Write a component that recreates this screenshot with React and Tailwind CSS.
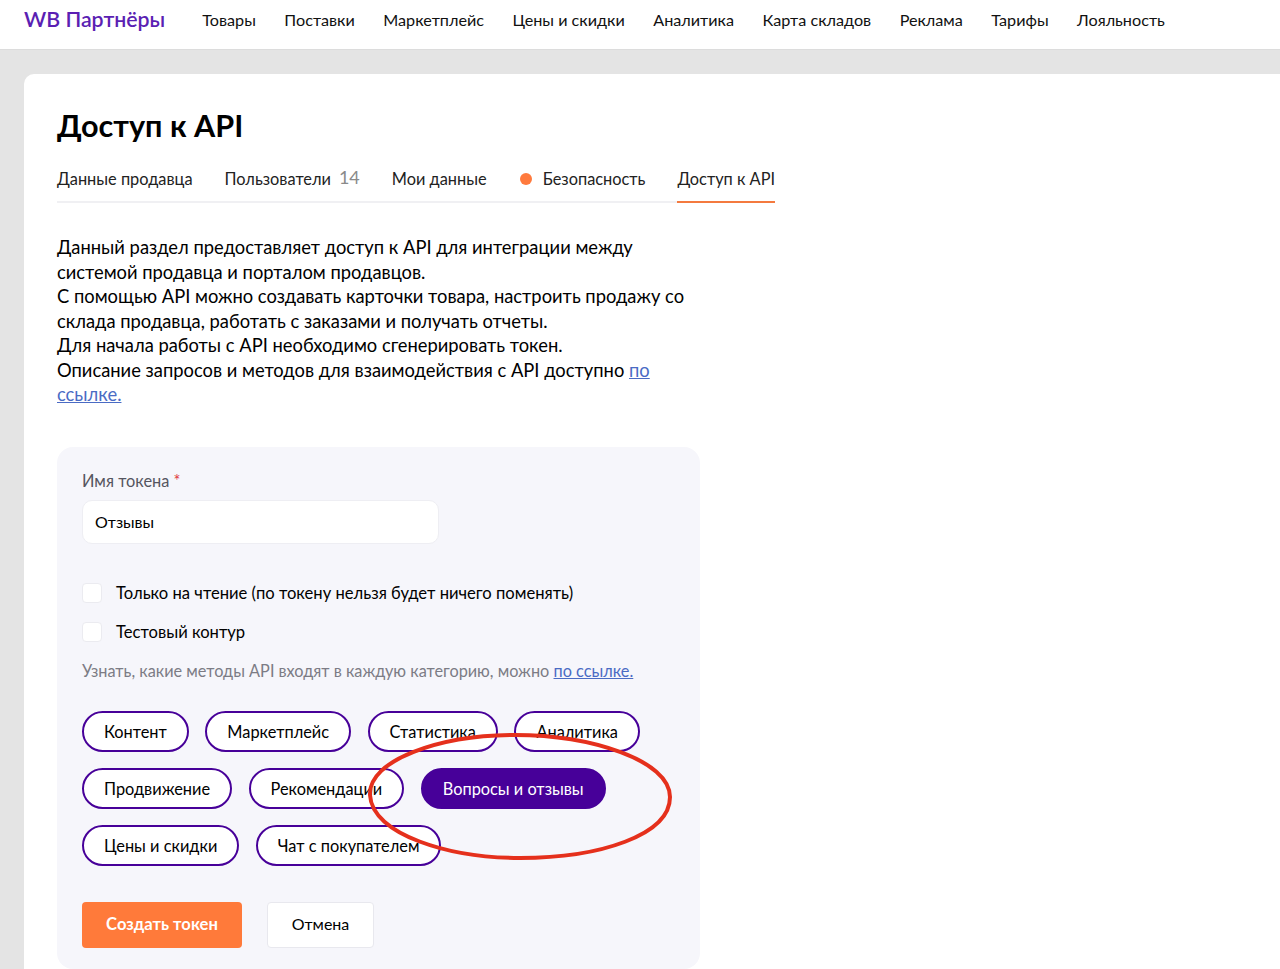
const font = { fontFamily: '"Lato", "Noto Sans", sans-serif' };

const navItems = ["Товары", "Поставки", "Маркетплейс", "Цены и скидки", "Аналитика", "Карта складов", "Реклама", "Тарифы", "Лояльность"];

const chipRows = [
    ["Контент", "Маркетплейс", "Статистика", "Аналитика"],
    ["Продвижение", "Рекомендации", "Вопросы и отзывы"],
    ["Цены и скидки", "Чат с покупателем"],
];

const Chip = ({ label }) => {
    const active = label === "Вопросы и отзывы";
    return (
        <button
            className={
                active
                    ? "h-[41px] px-5 pt-[3px] rounded-[21px] border-2 border-[#470099] bg-[#470099] text-white text-[16.35px]"
                    : "h-[41px] px-5 pt-[3px] rounded-[21px] border-2 border-[#470099] bg-white text-black text-[16.35px]"
            }
        >
            {label}
        </button>
    );
};

const Checkbox = ({ label }) => (
    <label className="flex items-center gap-[14px] h-[20px] text-[16.6px] text-black">
        <span className="w-5 h-5 rounded-[4px] bg-white border border-[#ebebf0]"></span>
        <span className="pt-[2px]">{label}</span>
    </label>
);

const App = () => {
    return (
        <div className="h-[969px] overflow-hidden bg-[#e4e4e4]" style={font}>
            <header className="h-[50px] bg-white flex items-start pl-6 border-b border-[#dcdcdc]">
                <div className="text-[#5b1fb3] text-[21.3px] font-semibold leading-[38px] mr-[37px]">WB Партнёры</div>
                <nav className="flex gap-[28.5px] pt-2 text-[16.2px] leading-6 text-[#111]">
                    {navItems.map((item) => (
                        <a key={item}>{item}</a>
                    ))}
                </nav>
            </header>

            <main className="relative mt-6 ml-6 h-[900px] bg-white rounded-tl-[10px] pl-[33px] pt-8">
                <h1 className="text-[30.6px] font-bold leading-10 text-black">Доступ к API</h1>

                <div className="mt-[17px] w-[718px] h-[40px] flex gap-8 border-b-2 border-[#f0f0f3] text-[16.35px] leading-[32px] text-[#222] whitespace-nowrap">
                    <a>Данные продавца</a>
                    <a className="flex gap-2">
                        Пользователи <span className="text-lg text-[#8a8a8a] leading-[28px]">14</span>
                    </a>
                    <a>Мои данные</a>
                    <a className="h-[32px] flex items-center gap-[10px]">
                        <span className="w-3 h-3 rounded-full bg-[#ff7a3d] mx-[1px]"></span>
                        Безопасность
                    </a>
                    <a className="h-[40px] border-b-2 border-[#f47a3f]">Доступ к API</a>
                </div>

                <p className="mt-8 w-[640px] text-[18.35px] leading-[24.5px] text-black">
                    Данный раздел предоставляет доступ к API для интеграции между
                    <br />
                    системой продавца и порталом продавцов.
                    <br />
                    С помощью API можно создавать карточки товара, настроить продажу со
                    <br />
                    склада продавца, работать с заказами и получать отчеты.
                    <br />
                    Для начала работы с API необходимо сгенерировать токен.
                    <br />
                    Описание запросов и методов для взаимодействия с API доступно{" "}
                    <a className="text-[#4a6bc4] underline">по</a>
                    <br />
                    <a className="text-[#4a6bc4] underline">ссылке.</a>
                </p>

                <section className="mt-10 w-[643px] h-[522px] bg-[#f6f6fb] rounded-[16px] px-[25px] pt-6">
                    <div className="text-[16.35px] leading-5 text-[#55555f]">
                        Имя токена <span className="text-[#e0393e]">*</span>
                    </div>
                    <div className="mt-[9px] w-[357px] h-[44px] flex items-center px-3 bg-white rounded-[10px] border border-[#eeeef3] text-base text-black">
                        Отзывы
                    </div>

                    <div className="mt-[39px] flex flex-col gap-[19px]">
                        <Checkbox label="Только на чтение (по токену нельзя будет ничего поменять)" />
                        <Checkbox label="Тестовый контур" />
                    </div>

                    <p className="mt-[19px] text-[16.3px] leading-5 text-[#7c7c85]">
                        Узнать, какие методы API входят в каждую категорию, можно{" "}
                        <a className="text-[#4a6bc4] underline">по ссылке.</a>
                    </p>

                    <div className="mt-[30px] flex flex-col gap-4">
                        {chipRows.map((row) => (
                            <div key={row[0]} className="flex gap-[16.5px]">
                                {row.map((label) => (
                                    <Chip key={label} label={label} />
                                ))}
                            </div>
                        ))}
                    </div>

                    <div className="mt-[36px] flex gap-[25px]">
                        <button className="w-[160px] h-[46px] rounded-[4px] bg-[#ff7a3a] text-white text-[16.6px] font-bold">
                            Создать токен
                        </button>
                        <button className="w-[107px] h-[46px] pb-[2px] rounded-[4px] bg-white border border-[#e8e8ee] text-black text-base">
                            Отмена
                        </button>
                    </div>
                </section>

                {/* red hand-drawn ellipse on top of the screenshot */}
                <svg className="absolute left-[340px] top-[654px]" width="312" height="136" viewBox="0 0 312 136" fill="none">
                    <path
                        d="M151 7C76 7 4 32 6 67C8 107 86 130 156 130C236 130 306 107 306 69C306 32 226 7 151 7Z"
                        stroke="#e5301c"
                        strokeWidth="4"
                    />
                </svg>
            </main>
        </div>
    );
};

export default App;
